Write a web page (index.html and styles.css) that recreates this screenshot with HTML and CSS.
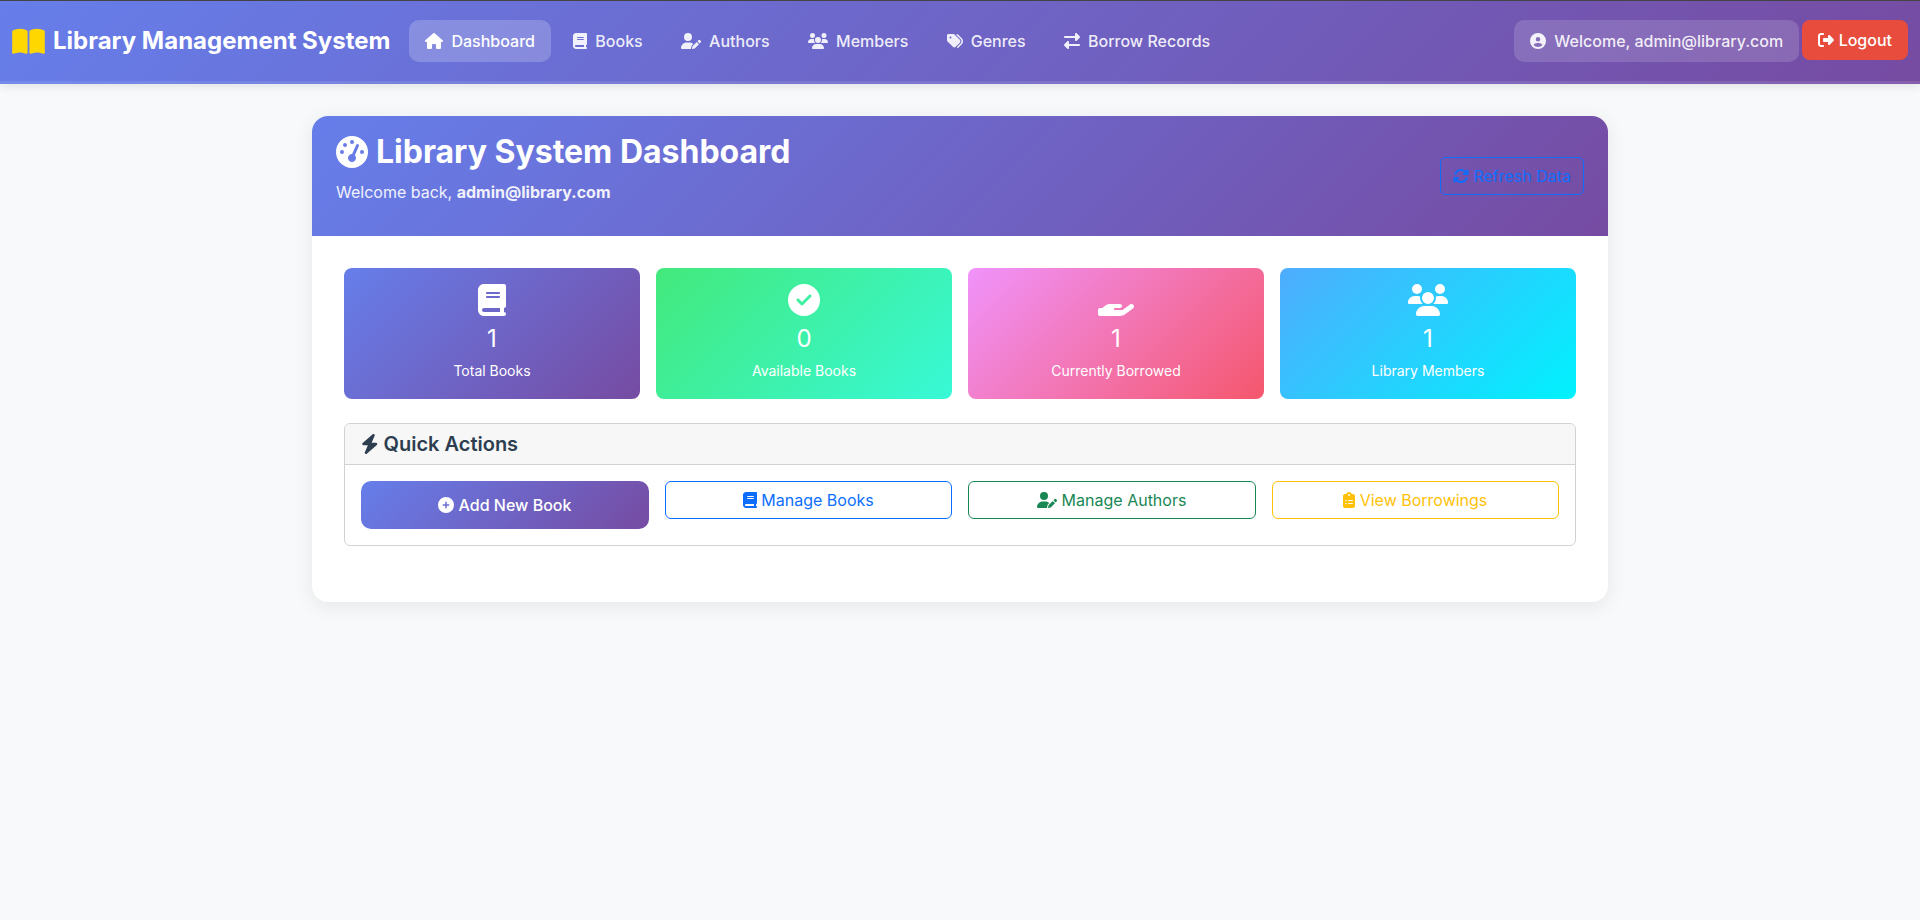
FILE: index.html
```html
<!DOCTYPE html>
<html lang="en">
<head>
    <meta charset="UTF-8">
    <meta name="viewport" content="width=device-width, initial-scale=1.0">
    <title>Library Management System</title>
    <link rel="stylesheet" href="styles.css">
</head>
<body>
    <!-- icon sprite -->
    <svg class="sprite" xmlns="http://www.w3.org/2000/svg">
        <symbol id="i-book-open" viewBox="0 0 576 512"><path d="M249.6 471.5c10.8 3.8 22.4-4.1 22.4-15.5V78.6c0-4.2-1.6-8.4-5-11C247.4 52 202.4 32 144 32C93.5 32 46.3 45.3 18.1 56.1C6.8 60.5 0 71.7 0 83.8V454.1c0 11.9 12.8 20.2 24.1 16.5C55.6 460.1 105.5 448 144 448c33.9 0 79 14 105.6 23.5zm76.8 0C353 462 398.1 448 432 448c38.5 0 88.4 12.1 119.9 22.6c11.3 3.8 24.1-4.6 24.1-16.5V83.8c0-12.1-6.8-23.3-18.1-27.6C529.7 45.3 482.5 32 432 32c-58.4 0-103.4 20-123 35.6c-3.3 2.6-5 6.8-5 11V456c0 11.4 11.7 19.3 22.4 15.5z"/></symbol>
        <symbol id="i-house" viewBox="0 0 576 512"><path d="M575.8 255.5c0 18-15 32.1-32 32.1h-32l.7 160.2c0 2.7-.2 5.4-.5 8.1V472c0 22.1-17.9 40-40 40H456c-1.1 0-2.2 0-3.3-.1c-1.4 .1-2.8 .1-4.2 .1H416 392c-22.1 0-40-17.9-40-40V448 384c0-17.7-14.3-32-32-32H256c-17.7 0-32 14.3-32 32v64 24c0 22.1-17.9 40-40 40H160 128.1c-1.5 0-3-.1-4.5-.2c-1.2 .1-2.4 .2-3.6 .2H104c-22.1 0-40-17.9-40-40V360c0-.9 0-1.9 .1-2.8V287.6H32c-18 0-32-14-32-32.1c0-9 3-17 10-24L266.4 8c7-7 15-8 22-8s15 2 21 7L564.8 231.5c8 7 12 15 11 24z"/></symbol>
        <symbol id="i-book" viewBox="0 0 448 512"><path d="M96 0C43 0 0 43 0 96V416c0 53 43 96 96 96H384h32c17.7 0 32-14.3 32-32s-14.3-32-32-32V384c17.7 0 32-14.3 32-32V32c0-17.7-14.3-32-32-32H384 96zm0 384H352v64H96c-17.7 0-32-14.3-32-32s14.3-32 32-32zm32-240c0-8.8 7.2-16 16-16H336c8.8 0 16 7.2 16 16s-7.2 16-16 16H144c-8.8 0-16-7.2-16-16zm16 48H336c8.8 0 16 7.2 16 16s-7.2 16-16 16H144c-8.8 0-16-7.2-16-16s7.2-16 16-16z"/></symbol>
        <symbol id="i-user-pen" viewBox="0 0 640 512"><path d="M224 256A128 128 0 1 0 224 0a128 128 0 1 0 0 256zm-45.7 48C79.8 304 0 383.8 0 482.3C0 498.7 13.3 512 29.7 512H322.9c-3.1-8.8-3.7-18.4-1.4-27.8l15-60.1c2.8-11.3 8.6-21.5 16.8-29.7l40.3-40.3c-32.1-31-75.7-50.1-123.9-50.1H178.3zm435.5-68.3c-15.6-15.6-40.9-15.6-56.6 0l-29.4 29.4 71 71 29.4-29.4c15.6-15.6 15.6-40.9 0-56.6l-14.4-14.4zM375.9 417c-4.1 4.1-7 9.2-8.4 14.9l-15 60.1c-1.4 5.5 .2 11.2 4.2 15.2s9.7 5.6 15.2 4.2l60.1-15c5.6-1.4 10.8-4.3 14.9-8.4L576.1 358.7l-71-71L375.9 417z"/></symbol>
        <symbol id="i-users" viewBox="0 0 640 512"><path d="M144 0a80 80 0 1 1 0 160A80 80 0 1 1 144 0zM512 0a80 80 0 1 1 0 160A80 80 0 1 1 512 0zM0 298.7C0 239.8 47.8 192 106.7 192h42.7c15.9 0 31 3.5 44.6 9.7c-1.3 7.2-1.9 14.7-1.9 22.3c0 38.2 16.8 72.5 43.3 96c-.2 0-.4 0-.7 0H21.3C9.6 320 0 310.4 0 298.7zM405.3 320c-.2 0-.4 0-.7 0c26.6-23.5 43.3-57.8 43.3-96c0-7.6-.7-15-1.9-22.3c13.6-6.3 28.7-9.7 44.6-9.7h42.7C592.2 192 640 239.8 640 298.7c0 11.8-9.6 21.3-21.3 21.3H405.3zM224 224a96 96 0 1 1 192 0 96 96 0 1 1 -192 0zM128 485.3C128 411.7 187.7 352 261.3 352H378.7C452.3 352 512 411.7 512 485.3c0 14.7-11.9 26.7-26.7 26.7H154.7c-14.7 0-26.7-11.9-26.7-26.7z"/></symbol>
        <symbol id="i-tags" viewBox="0 0 512 512"><path d="M345 39.1L472.8 168.4c52.4 53 52.4 138.2 0 191.2L360.8 472.9c-9.3 9.4-24.5 9.5-33.9 .2s-9.5-24.5-.2-33.9L438.6 325.9c33.9-34.3 33.9-89.4 0-123.7L310.9 72.9c-9.3-9.4-9.2-24.6 .2-33.9s24.6-9.2 33.9 .2zM0 229.5V80C0 53.5 21.5 32 48 32H197.5c17 0 33.3 6.7 45.3 18.7l168 168c25 25 25 65.5 0 90.5L277.3 442.7c-25 25-65.5 25-90.5 0l-168-168C6.7 262.7 0 246.5 0 229.5zM144 144a32 32 0 1 0 -64 0 32 32 0 1 0 64 0z"/></symbol>
        <symbol id="i-exchange" viewBox="0 0 512 512"><path d="M32 96l320 0V32c0-12.9 7.8-24.6 19.8-29.6s25.7-2.2 34.9 6.9l96 96c6 6 9.4 14.1 9.4 22.6s-3.4 16.6-9.4 22.6l-96 96c-9.2 9.2-22.9 11.9-34.9 6.9s-19.8-16.6-19.8-29.6V160L32 160c-17.7 0-32-14.3-32-32s14.3-32 32-32zM480 352c17.7 0 32 14.3 32 32s-14.3 32-32 32H160v64c0 12.9-7.8 24.6-19.8 29.6s-25.7 2.2-34.9-6.9l-96-96c-6-6-9.4-14.1-9.4-22.6s3.4-16.6 9.4-22.6l96-96c9.2-9.2 22.9-11.9 34.9-6.9s19.8 16.6 19.8 29.6l0 64H480z"/></symbol>
        <symbol id="i-circle-user" viewBox="0 0 512 512"><path d="M399 384.2C376.9 345.8 335.4 320 288 320H224c-47.4 0-88.9 25.8-111 64.2c35.2 39.2 86.2 63.8 143 63.8s107.8-24.7 143-63.8zM0 256a256 256 0 1 1 512 0A256 256 0 1 1 0 256zm256 16a72 72 0 1 0 0-144 72 72 0 1 0 0 144z"/></symbol>
        <symbol id="i-sign-out" viewBox="0 0 512 512"><path d="M377.9 105.9L500.7 228.7c7.2 7.2 11.3 17.1 11.3 27.3s-4.1 20.1-11.3 27.3L377.9 406.1c-6.4 6.4-15 9.9-24 9.9c-18.7 0-33.9-15.2-33.9-33.9l0-62.1-128 0c-17.7 0-32-14.3-32-32l0-64c0-17.7 14.3-32 32-32l128 0 0-62.1c0-18.7 15.2-33.9 33.9-33.9c9 0 17.6 3.6 24 9.9zM160 96L96 96c-17.7 0-32 14.3-32 32l0 256c0 17.7 14.3 32 32 32l64 0c17.7 0 32 14.3 32 32s-14.3 32-32 32l-64 0c-53 0-96-43-96-96L0 128C0 75 43 32 96 32l64 0c17.7 0 32 14.3 32 32s-14.3 32-32 32z"/></symbol>
        <symbol id="i-gauge" viewBox="0 0 512 512"><path d="M0 256a256 256 0 1 1 512 0A256 256 0 1 1 0 256zM288 96a32 32 0 1 0 -64 0 32 32 0 1 0 64 0zM256 416c35.3 0 64-28.7 64-64c0-17.4-6.9-33.1-18.1-44.6L366 161.7c5.3-12.1-.2-26.3-12.3-31.6s-26.3 .2-31.6 12.3L257.9 288c-.6 0-1.3 0-1.9 0c-35.3 0-64 28.7-64 64s28.7 64 64 64zM176 144a32 32 0 1 0 -64 0 32 32 0 1 0 64 0zM96 288a32 32 0 1 0 0-64 32 32 0 1 0 0 64zm352-32a32 32 0 1 0 -64 0 32 32 0 1 0 64 0z"/></symbol>
        <symbol id="i-sync" viewBox="0 0 512 512"><path d="M105.1 202.6c7.7-21.8 20.2-42.3 37.8-59.8c62.5-62.5 163.8-62.5 226.3 0L386.3 160H352c-17.7 0-32 14.3-32 32s14.3 32 32 32H463.5c0 0 0 0 0 0h.4c17.7 0 32-14.3 32-32V80c0-17.7-14.3-32-32-32s-32 14.3-32 32v35.2L414.4 97.6c-87.5-87.5-229.3-87.5-316.8 0C73.2 122 55.6 150.7 44.8 181.4c-5.9 16.7 2.9 34.9 19.5 40.8s34.9-2.9 40.8-19.5zM39 289.3c-5 1.5-9.8 4.2-13.7 8.2c-4 4-6.7 8.8-8.1 14c-.3 1.2-.6 2.5-.8 3.8c-.3 1.7-.4 3.4-.4 5.1V432c0 17.7 14.3 32 32 32s32-14.3 32-32V396.9l17.6 17.5 0 0c87.5 87.4 229.3 87.4 316.7 0c24.4-24.4 42.1-53.1 52.9-83.7c5.9-16.7-2.9-34.9-19.5-40.8s-34.9 2.9-40.8 19.5c-7.7 21.8-20.2 42.3-37.8 59.8c-62.5 62.5-163.8 62.5-226.3 0l-.1-.1L125.6 352H160c17.7 0 32-14.3 32-32s-14.3-32-32-32H48.4c-1.6 0-3.2 .1-4.8 .3s-3.1 .5-4.6 1z"/></symbol>
        <symbol id="i-circle-check" viewBox="0 0 512 512"><path d="M256 512A256 256 0 1 0 256 0a256 256 0 1 0 0 512zM369 209L241 337c-9.4 9.4-24.6 9.4-33.9 0l-64-64c-9.4-9.4-9.4-24.6 0-33.9s24.6-9.4 33.9 0l47 47L335 175c9.4-9.4 24.6-9.4 33.9 0s9.4 24.6 0 33.9z"/></symbol>
        <symbol id="i-hand" viewBox="0 0 576 512"><path d="M559.7 392.2c17.8-13.1 21.6-38.1 8.5-55.9s-38.1-21.6-55.9-8.5L392.6 416H272c-8.8 0-16-7.2-16-16s7.2-16 16-16h16 64c17.7 0 32-14.3 32-32s-14.3-32-32-32H288 272 193.7c-29.1 0-57.3 9.9-80 28L68.8 384H32c-17.7 0-32 14.3-32 32v64c0 17.7 14.3 32 32 32H192 352.5c29 0 57.3-9.3 80.7-26.5l126.6-93.3z"/></symbol>
        <symbol id="i-circle-plus" viewBox="0 0 512 512"><path d="M256 512A256 256 0 1 0 256 0a256 256 0 1 0 0 512zM232 344V280H168c-13.3 0-24-10.7-24-24s10.7-24 24-24h64V168c0-13.3 10.7-24 24-24s24 10.7 24 24v64h64c13.3 0 24 10.7 24 24s-10.7 24-24 24H280v64c0 13.3-10.7 24-24 24s-24-10.7-24-24z"/></symbol>
        <symbol id="i-bolt" viewBox="0 0 448 512"><path d="M349.4 44.6c5.9-13.7 1.5-29.7-10.6-38.5s-28.6-8-39.9 1.8l-256 224c-10 8.8-13.6 22.9-8.9 35.3S50.7 288 64 288H175.5L98.6 467.4c-5.9 13.7-1.5 29.7 10.6 38.5s28.6 8 39.9-1.8l256-224c10-8.8 13.6-22.9 8.9-35.3s-16.6-20.7-30-20.7H272.5L349.4 44.6z"/></symbol>
        <symbol id="i-clipboard" viewBox="0 0 384 512"><path d="M192 0c-41.8 0-77.4 26.7-90.5 64H64C28.7 64 0 92.7 0 128V448c0 35.3 28.7 64 64 64H320c35.3 0 64-28.7 64-64V128c0-35.3-28.7-64-64-64H282.5C269.4 26.7 233.8 0 192 0zm0 64a32 32 0 1 1 0 64 32 32 0 1 1 0-64zM72 272a24 24 0 1 1 48 0 24 24 0 1 1 -48 0zm104-16H304c8.8 0 16 7.2 16 16s-7.2 16-16 16H176c-8.8 0-16-7.2-16-16s7.2-16 16-16zM72 368a24 24 0 1 1 48 0 24 24 0 1 1 -48 0zm88 0c0-8.8 7.2-16 16-16H304c8.8 0 16 7.2 16 16s-7.2 16-16 16H176c-8.8 0-16-7.2-16-16z"/></symbol>
    </svg>

    <nav class="navbar">
        <a class="brand" href="#"><svg class="icon brand-icon"><use href="#i-book-open"/></svg>Library Management System</a>
        <ul class="nav-links">
            <li><a class="nav-link active" href="#"><svg class="icon w-house"><use href="#i-house"/></svg>Dashboard</a></li>
            <li><a class="nav-link" href="#"><svg class="icon w-book"><use href="#i-book"/></svg>Books</a></li>
            <li><a class="nav-link" href="#"><svg class="icon w-wide"><use href="#i-user-pen"/></svg>Authors</a></li>
            <li><a class="nav-link" href="#"><svg class="icon w-wide"><use href="#i-users"/></svg>Members</a></li>
            <li><a class="nav-link" href="#"><svg class="icon w-square"><use href="#i-tags"/></svg>Genres</a></li>
            <li><a class="nav-link" href="#"><svg class="icon w-square"><use href="#i-exchange"/></svg>Borrow Records</a></li>
        </ul>
        <div class="nav-right">
            <span class="user-pill"><svg class="icon w-square"><use href="#i-circle-user"/></svg>Welcome, admin@library.com</span>
            <a class="logout" href="#"><svg class="icon w-square"><use href="#i-sign-out"/></svg>Logout</a>
        </div>
    </nav>

    <main class="container">
        <section class="panel">
            <header class="panel-header">
                <div>
                    <h1><svg class="icon title-icon"><use href="#i-gauge"/></svg>Library System Dashboard</h1>
                    <p>Welcome back, <strong>admin@library.com</strong></p>
                </div>
                <a class="btn btn-blue refresh" href="#"><svg class="icon w-square"><use href="#i-sync"/></svg>Refresh Data</a>
            </header>

            <div class="panel-body">
                <div class="stats">
                    <div class="stat stat-purple">
                        <svg class="icon stat-icon"><use href="#i-book"/></svg>
                        <div class="stat-num">1</div>
                        <div class="stat-label">Total Books</div>
                    </div>
                    <div class="stat stat-green">
                        <svg class="icon stat-icon"><use href="#i-circle-check"/></svg>
                        <div class="stat-num">0</div>
                        <div class="stat-label">Available Books</div>
                    </div>
                    <div class="stat stat-pink">
                        <svg class="icon stat-icon"><use href="#i-hand"/></svg>
                        <div class="stat-num">1</div>
                        <div class="stat-label">Currently Borrowed</div>
                    </div>
                    <div class="stat stat-blue">
                        <svg class="icon stat-icon stat-icon-wide"><use href="#i-users"/></svg>
                        <div class="stat-num">1</div>
                        <div class="stat-label">Library Members</div>
                    </div>
                </div>

                <div class="actions-card">
                    <div class="actions-head">
                        <h2><svg class="icon bolt-icon"><use href="#i-bolt"/></svg>Quick Actions</h2>
                    </div>
                    <div class="actions-body">
                        <a class="btn-add" href="#"><svg class="icon w-square"><use href="#i-circle-plus"/></svg>Add New Book</a>
                        <a class="btn btn-blue" href="#"><svg class="icon w-book"><use href="#i-book"/></svg>Manage Books</a>
                        <a class="btn btn-green" href="#"><svg class="icon w-wide"><use href="#i-user-pen"/></svg>Manage Authors</a>
                        <a class="btn btn-yellow" href="#"><svg class="icon w-clip"><use href="#i-clipboard"/></svg>View Borrowings</a>
                    </div>
                </div>
            </div>
        </section>
    </main>
</body>
</html>
```

FILE: styles.css
```css
* {
    box-sizing: border-box;
}
body {
    margin: 0;
    min-height: 100vh;
    background-color: #f8f9fa;
    font-family: Inter, "Liberation Sans", sans-serif;
    font-size: 16px;
    line-height: 1.5;
    color: #212529;
}
a {
    text-decoration: none;
}
.sprite {
    display: none;
}
.icon {
    height: 16px;
    width: 16px;
    fill: currentColor;
    flex: none;
}
.w-house { width: 18px; }
.w-book { width: 14px; }
.w-wide { width: 20px; }
.w-clip { width: 12px; }
.w-square { width: 16px; }

/* navbar */
.navbar {
    height: 84px;
    display: flex;
    align-items: center;
    padding: 0 12px;
    background: linear-gradient(135deg, #667eea 0%, #764ba2 100%);
    border-top: 1px solid #444;
    border-bottom: 3px solid rgba(255, 255, 255, 0.1);
    box-shadow: 0 2px 10px rgba(0, 0, 0, 0.1);
}
.brand {
    display: flex;
    align-items: center;
    gap: 8px;
    margin-right: 19px;
    font-size: 24px;
    font-weight: 700;
    color: #fff;
}
.brand-icon {
    width: 33px;
    height: 29px;
    color: #ffd700;
}
.nav-links {
    display: flex;
    gap: 6.4px;
    margin: 0;
    padding: 0;
    list-style: none;
}
.nav-link {
    display: flex;
    align-items: center;
    gap: 8px;
    height: 42px;
    padding: 0 16px;
    border-radius: 10px;
    font-weight: 500;
    color: rgba(255, 255, 255, 0.9);
}
.nav-link.active {
    background: rgba(255, 255, 255, 0.2);
    color: #fff;
}
.nav-right {
    display: flex;
    align-items: center;
    gap: 3px;
    margin-left: auto;
}
.user-pill {
    display: flex;
    align-items: center;
    gap: 8px;
    height: 42px;
    padding: 0 16px;
    border-radius: 10px;
    background: rgba(255, 255, 255, 0.15);
    font-weight: 500;
    color: rgba(255, 255, 255, 0.9);
}
.logout {
    display: flex;
    align-items: center;
    gap: 4.5px;
    height: 40px;
    padding: 0 16px;
    margin-bottom: 2px;
    border-radius: 8px;
    background: #e74c3c;
    font-weight: 500;
    color: #fff;
}

/* main panel */
.container {
    width: 1296px;
    margin: 0 auto;
    padding-top: 32px;
}
.panel {
    background: #fff;
    border-radius: 16px;
    box-shadow: 0 4px 20px rgba(0, 0, 0, 0.08);
    overflow: hidden;
}
.panel-header {
    height: 120px;
    display: flex;
    justify-content: space-between;
    align-items: center;
    padding: 16px 24px;
    background: linear-gradient(135deg, #667eea 0%, #764ba2 100%);
    color: #fff;
}
.panel-header h1 {
    display: flex;
    align-items: center;
    gap: 8px;
    margin: 0 0 8px;
    font-size: 32px;
    line-height: 40px;
    font-weight: 700;
}
.panel-header p {
    margin: 0 0 16px;
    opacity: 0.9;
}
.panel-header strong {
    font-weight: 700;
}
.title-icon {
    width: 32px;
    height: 32px;
}
.panel-body {
    padding: 32px;
}

/* stat cards */
.stats {
    display: grid;
    grid-template-columns: repeat(4, 1fr);
    gap: 16px;
    margin-bottom: 24px;
}
.stat {
    height: 131px;
    display: flex;
    flex-direction: column;
    align-items: center;
    padding: 16px;
    border-radius: 8px;
    color: #fff;
}
.stat-purple { background: linear-gradient(135deg, #667eea 0%, #764ba2 100%); }
.stat-green { background: linear-gradient(135deg, #43e97b 0%, #38f9d7 100%); }
.stat-pink { background: linear-gradient(135deg, #f093fb 0%, #f5576c 100%); }
.stat-blue { background: linear-gradient(135deg, #4facfe 0%, #00f2fe 100%); }
.stat-icon {
    width: 36px;
    height: 32px;
    margin-bottom: 9px;
}
.stat-icon-wide {
    width: 40px;
}
.stat-num {
    margin-bottom: 6px;
    font-size: 24px;
    line-height: 28.8px;
    font-weight: 400;
}
.stat-label {
    font-size: 14px;
    line-height: 21px;
}

/* quick actions */
.actions-card {
    margin-bottom: 24px;
    border: 1px solid #d2d2d2;
    border-radius: 6px;
    overflow: hidden;
}
.actions-head {
    padding: 8px 16px;
    background: #f7f7f7;
    border-bottom: 1px solid #d2d2d2;
}
.actions-head h2 {
    display: flex;
    align-items: center;
    gap: 5px;
    margin: 0;
    font-size: 20px;
    line-height: 24px;
    font-weight: 600;
    color: #2c3e50;
}
.bolt-icon {
    width: 17.5px;
    height: 20px;
}
.actions-body {
    display: grid;
    grid-template-columns: repeat(4, 1fr);
    gap: 16px;
    align-items: start;
    padding: 16px;
}
.btn, .btn-add {
    display: flex;
    justify-content: center;
    align-items: center;
    gap: 4.5px;
}
.btn {
    height: 38px;
    border: 1px solid;
    border-radius: 6px;
}
.btn-blue { color: #0d6efd; border-color: #0d6efd; }
.btn-green { color: #198754; border-color: #198754; }
.btn-yellow { color: #ffc107; border-color: #ffc107; }
.btn-add {
    height: 48px;
    border-radius: 10px;
    background: linear-gradient(135deg, #667eea 0%, #764ba2 100%);
    font-weight: 500;
    color: #fff;
}
.refresh {
    width: 144px;
}
```
